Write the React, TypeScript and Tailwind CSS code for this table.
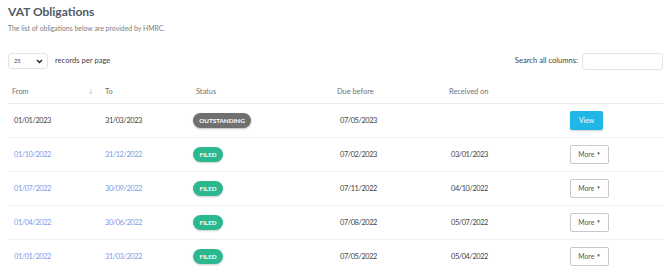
import React from "react";

const rows = [
  { from: "01/01/2023", to: "31/03/2023", status: "OUTSTANDING", due: "07/05/2023", rec: "", link: false },
  { from: "01/10/2022", to: "31/12/2022", status: "FILED", due: "07/02/2023", rec: "03/01/2023", link: true },
  { from: "01/07/2022", to: "30/09/2022", status: "FILED", due: "07/11/2022", rec: "04/10/2022", link: true },
  { from: "01/04/2022", to: "30/06/2022", status: "FILED", due: "07/08/2022", rec: "05/07/2022", link: true },
  { from: "01/01/2022", to: "31/03/2022", status: "FILED", due: "07/05/2022", rec: "05/04/2022", link: true },
];

const cols = "grid grid-cols-[91px_91px_142px_111px_122px_98px]";

export default function App() {
  return (
    <div className="w-[670px] h-[269px] overflow-hidden bg-white px-[8px] pt-[4px]" style={{ fontFamily: "Lato, 'Open Sans', sans-serif" }}>
      <h1 className="text-[12px] leading-[16px] font-bold text-[#505b66]">VAT Obligations</h1>
      <p className="mt-[3px] text-[6.9px] leading-[10px] text-[#808080]">The list of obligations below are provided by HMRC.</p>
      <div className="mt-[20px] flex items-center justify-between h-[16px] w-[655px]">
        <div className="flex items-center">
          <div className="w-[40px] h-[16px] border border-[#e4e4e4] rounded-[3px] flex items-center justify-between pl-[5px] pr-[4px]">
            <span className="text-[5.8px] text-[#444]">25</span>
            <svg width="7" height="5" viewBox="0 0 7 5"><path d="M1 1l2.5 2.5L6 1" stroke="#222" strokeWidth="1.4" fill="none" /></svg>
          </div>
          <span className="ml-[7px] text-[7.6px] text-[#444]">records per page</span>
        </div>
        <div className="flex items-center">
          <span className="text-[7.6px] text-[#444] mr-[4px]">Search all columns:</span>
          <div className="w-[81px] h-[17px] border border-[#e4e4e4] rounded-[3px]" />
        </div>
      </div>
      <div className="mt-[11px] w-[655px] text-[7.4px]">
        <div className={`${cols} h-[24px] items-center border-b border-[#ececec] text-[#707070]`}>
          <div className="pl-[4px] flex justify-between pr-[6px]"><span>From</span><span className="text-[#aaa] text-[6px]">↓</span></div>
          <div className="pl-[6px]">To</div>
          <div className="pl-[6px]">Status</div>
          <div className="pl-[5px]">Due before</div>
          <div className="pl-[6px]">Received on</div>
          <div />
        </div>
        {rows.map((r, i) => (
          <div key={i} className={`${cols} h-[34px] items-center border-b border-[#f0f0f0] text-[#444] tracking-[-0.4px]`}>
            <div className={`pl-[6px] ${r.link ? "text-[#7d9be6]" : ""}`}>{r.from}</div>
            <div className={`pl-[6px] ${r.link ? "text-[#7d9be6]" : ""}`}>{r.to}</div>
            <div className="pl-[3px] tracking-normal">
              {r.status === "OUTSTANDING" ? (
                <span className="inline-flex items-center justify-center h-[15px] w-[58px] rounded-full bg-[#707070] text-white font-bold text-[6.3px] shadow-[0_1px_2px_rgba(0,0,0,0.25)]">OUTSTANDING</span>
              ) : (
                <span className="inline-flex items-center justify-center h-[15px] w-[30px] rounded-full bg-[#2bb88f] text-white font-bold text-[6.3px] shadow-[0_1px_2px_rgba(0,0,0,0.2)]">FILED</span>
              )}
            </div>
            <div className="pl-[8px]">{r.due}</div>
            <div className="pl-[8px]">{r.rec}</div>
            <div className="pl-[5px] tracking-normal">
              {r.status === "OUTSTANDING" ? (
                <span className="inline-flex items-center justify-center w-[33px] h-[19px] rounded-[2px] bg-[#20b6e6] text-white text-[6.8px] shadow-[0_1px_2px_rgba(0,0,0,0.2)]">View</span>
              ) : (
                <span className="inline-flex items-center justify-center gap-[2px] w-[39px] h-[19px] rounded-[2px] border border-[#c8c8c8] bg-white text-[#555] text-[6.8px]">More<span className="text-[4.5px]">▼</span></span>
              )}
            </div>
          </div>
        ))}
      </div>
    </div>
  );
}
